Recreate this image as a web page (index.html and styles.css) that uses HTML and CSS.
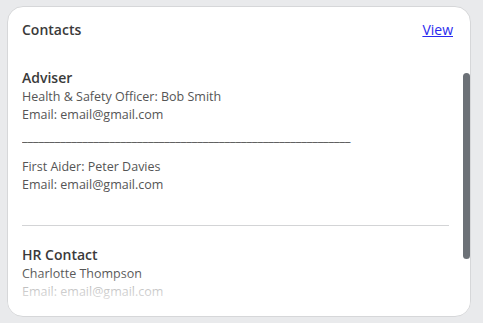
FILE: index.html
```html
<!DOCTYPE html>
<html lang="en">
<head>
    <meta charset="UTF-8">
    <title>Contacts</title>
    <link rel="stylesheet" href="styles.css">
</head>
<body>
    <div class="card">
        <div class="card-header">
            <h2>Contacts</h2>
            <a href="#" class="view-link">View</a>
        </div>

        <div class="card-body">
            <div class="contact-group">
                <h3>Adviser</h3>
                <p>Health &amp; Safety Officer: Bob Smith</p>
                <p>Email: email@gmail.com</p>
                <p class="divider-text">____________________________________________________________</p>
                <p class="spaced">First Aider: Peter Davies</p>
                <p>Email: email@gmail.com</p>
            </div>

            <hr>

            <div class="contact-group">
                <h3>HR Contact</h3>
                <p>Charlotte Thompson</p>
                <p>Email: email@gmail.com</p>
            </div>
            <div class="fade"></div>
        </div>

        <div class="scroll-thumb"></div>
    </div>
</body>
</html>
```

FILE: styles.css
```css
html, body {
    height: 100%;
    margin: 0;
}

body {
    background-color: #e9eaec;
    font-family: "Open Sans", "Liberation Sans", sans-serif;
    color: #333;
    padding: 6px 12px 6px 7px;
    box-sizing: border-box;
}

/* the white box */
.card {
    position: relative;
    height: 100%;
    background-color: white;
    border: 1px solid #d6d7d9;
    border-radius: 16px;
    box-sizing: border-box;
    overflow: hidden;
}

.card-header {
    display: flex;
    justify-content: space-between;
    align-items: center;
    padding: 13px 17px 0 14px;
}

.card-header h2 {
    margin: 0;
    font-size: 14px;
    font-weight: 600;
    line-height: 20px;
    color: #3a3a3a;
}

.view-link {
    font-size: 14px;
    line-height: 20px;
    color: #2a2aee;
}

.card-body {
    position: relative;
    padding: 28px 21px 0 14px;
}

.contact-group h3 {
    margin: 0;
    font-size: 14px;
    font-weight: 600;
    line-height: 20px;
    color: #3a3a3a;
}

.contact-group p {
    margin: 0;
    font-size: 12.5px;
    line-height: 18px;
    color: #555;
}

.contact-group p.divider-text {
    margin-top: 4px;
    color: #444;
    overflow: hidden;
    white-space: nowrap;
}

.contact-group p.spaced {
    margin-top: 12px;
}

hr {
    border: none;
    border-top: 1px solid #d3d4d6;
    margin: 31px 0 19px;
}

.fade {
    position: absolute;
    left: 0;
    right: 0;
    top: 234px;
    height: 40px;
    background: linear-gradient(to bottom, rgba(255, 255, 255, 0), rgba(255, 255, 255, 0.65) 35%, white 100%);
}

.scroll-thumb {
    position: absolute;
    top: 66px;
    right: 0;
    width: 7px;
    height: 186px;
    background-color: #6c7177;
    border-radius: 4px;
}
```
